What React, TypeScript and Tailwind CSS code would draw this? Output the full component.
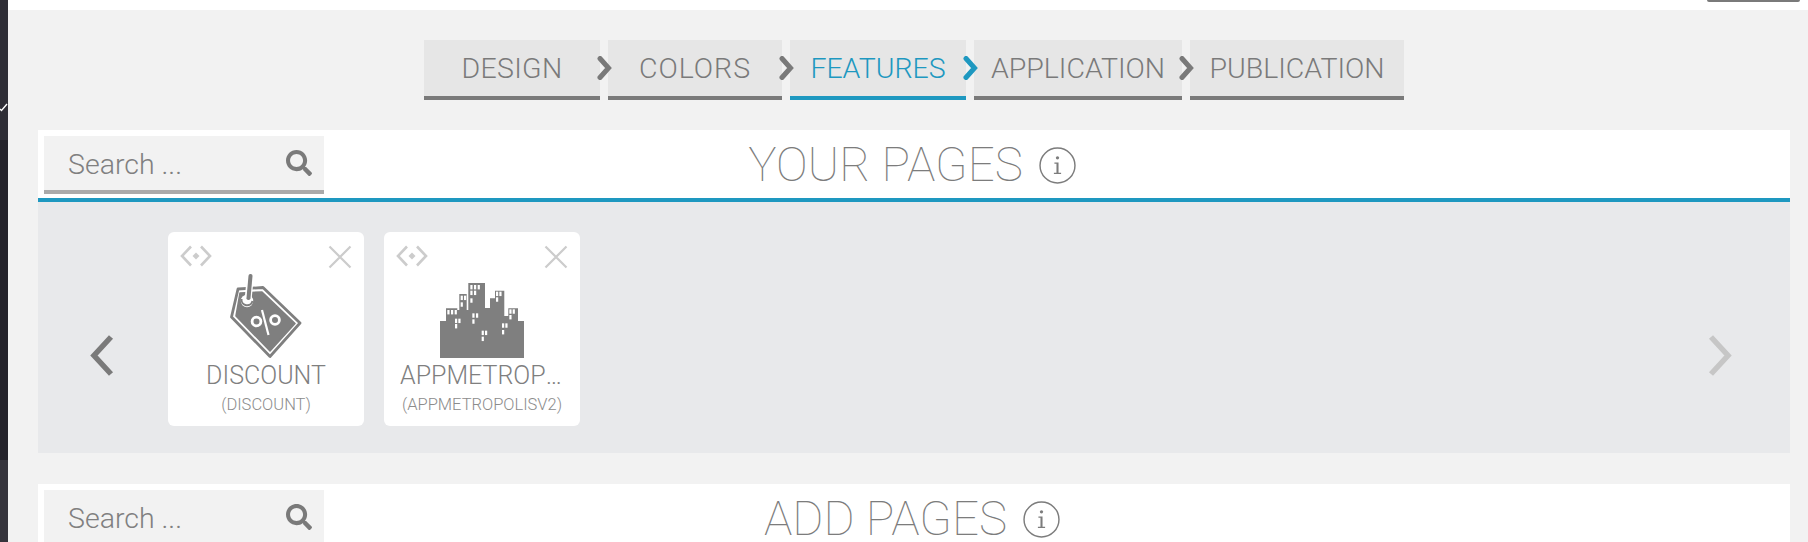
import React from "react";
import { FaSearch } from "react-icons/fa";

const steps = [
  { label: "DESIGN", width: "w-[176px]", tracking: "tracking-[0.3px]" },
  { label: "COLORS", width: "w-[174px]", tracking: "tracking-[1px]" },
  { label: "FEATURES", width: "w-[176px]", tracking: "", active: true },
  { label: "APPLICATION", width: "w-[208px]", tracking: "" },
  { label: "PUBLICATION", width: "w-[214px]", tracking: "", last: true },
];

const windows = [
  [301, 195], [312, 195], [323, 195], [301, 212], [312, 212], [301, 235],
  [272, 227], [282, 227], [272, 247],
  [232, 270], [243, 270], [254, 270],
  [378, 215], [388, 215], [378, 232],
  [418, 268], [428, 268], [418, 285],
  [255, 296], [265, 296], [255, 312],
  [307, 280], [318, 280], [307, 298],
  [335, 332], [345, 332], [335, 350],
  [396, 310], [406, 310], [396, 330],
];

const StepArrow = ({ className }: { className: string }) => (
  <svg viewBox="0 0 15 24" className={className} fill="none" stroke="currentColor" strokeWidth="5" strokeLinecap="round" strokeLinejoin="miter">
    <path d="M3 2.5 L11.5 12 L3 21.5" />
  </svg>
);

const InfoIcon = () => (
  <svg viewBox="0 0 36 36" className="w-[37px] h-[37px] shrink-0 text-[#7c7c7c]">
    <circle cx="18" cy="18" r="17" fill="none" stroke="currentColor" strokeWidth="1.4" />
    <circle cx="18" cy="10.5" r="1.6" fill="currentColor" />
    <path d="M15 15 H19 V25 H21.5 V26.2 H14.5 V25 H17 V16.2 H15 Z" fill="currentColor" />
  </svg>
);

const SearchBox = () => (
  <div className="w-[280px] h-[58px] bg-[#f2f2f2] border-b-4 border-[#aaaaaa] flex items-center justify-between pl-6 pr-3">
    <span className="text-[28.5px] font-light text-[#808080] pt-1">Search ...</span>
    <FaSearch className="text-[26px] text-[#7a7a7a]" />
  </div>
);

const SectionHeader = ({ title }: { title: string }) => (
  <div className="grid grid-cols-[1fr_auto_1fr] items-center pl-1.5 pr-2.5 pt-1.5 pb-1 bg-white">
    <SearchBox />
    <div className="flex items-center gap-4 text-[#7c7c7c]">
      <h2 className="text-[47.5px] leading-[54px] font-thin">{title}</h2>
      <InfoIcon />
    </div>
    <div />
  </div>
);

const MoveIcon = () => (
  <svg viewBox="0 0 32 22" className="w-8 h-[22px]" fill="none" stroke="#cccccc" strokeWidth="2.6">
    <path d="M11 1.5 L2 11 L11 20.5" />
    <path d="M21 1.5 L30 11 L21 20.5" />
    <path d="M16 7.5 L19.5 11 L16 14.5 L12.5 11 Z" fill="#cccccc" stroke="none" />
  </svg>
);

const CloseIcon = () => (
  <svg viewBox="0 0 24 24" className="w-6 h-6" fill="none" stroke="#cccccc" strokeWidth="2.2">
    <path d="M1.5 1.5 L22.5 22.5 M22.5 1.5 L1.5 22.5" />
  </svg>
);

const TagIcon = () => (
  <svg viewBox="0 0 72 84" className="w-[72px] h-[84px]">
    <path d="M8 15 L33 13.5 L70 49 L40 82.5 L1.5 43 Z" fill="none" stroke="#7f7f7f" strokeWidth="2.8" strokeLinejoin="round" />
    <path d="M10 19 L32 18 L65 49.5 L40 77 L6 42 Z" fill="#7f7f7f" stroke="#7f7f7f" strokeWidth="1.5" strokeLinejoin="round" />
    <circle cx="17" cy="27" r="6.2" fill="#ffffff" />
    <path d="M20.5 1.5 L18 26" stroke="#ffffff" strokeWidth="7" />
    <path d="M11.5 25 A5.6 5.6 0 0 0 22.5 27" fill="none" stroke="#7f7f7f" strokeWidth="2" />
    <path d="M20.5 2 L18.5 24" stroke="#7f7f7f" strokeWidth="4" strokeLinecap="round" />
    <circle cx="26.5" cy="47.5" r="4.4" fill="none" stroke="#ffffff" strokeWidth="2.8" />
    <circle cx="45" cy="46" r="4.4" fill="none" stroke="#ffffff" strokeWidth="2.8" />
    <path d="M32 36 L38.5 61" stroke="#ffffff" strokeWidth="2.2" />
  </svg>
);

const CityIcon = () => (
  <svg viewBox="0 0 84 75" className="w-[84px] h-[75px]">
    <path
      d="M0 75 H84 V38 H78 V25.3 H68.3 V33 H64.3 V7.7 H55 V15.3 H50 V25 H45 V0 H28.3 V27 H26.7 V11 H19.3 V27 H17.3 V25.3 H6 V38 H0 Z"
      fill="#7f7f7f"
    />
    {windows.map(([x, y]) => (
      <rect key={`${x}-${y}`} x={x / 3 - 70} y={y / 3 - 63} width="2.2" height="4.4" fill="#ffffff" />
    ))}
  </svg>
);

const PageCard = ({ name, id, icon }: { name: string; id: string; icon: React.ReactNode }) => (
  <div className="w-[196px] h-[194px] bg-white rounded-md shrink-0 px-3 pt-[13px] flex flex-col">
    <div className="flex items-start justify-between h-[22px]">
      <MoveIcon />
      <CloseIcon />
    </div>
    <div className="h-[91px] flex items-end justify-center">{icon}</div>
    <div className="mt-1 px-1 text-center text-[25px] leading-7 font-light text-[#7f7f7f] truncate">{name}</div>
    <div className="mt-[5px] text-center text-[16.5px] leading-5 font-light text-[#8c8c8c] whitespace-nowrap">{id}</div>
  </div>
);

export default function App() {
  return (
    <div className="h-[542px] w-[1808px] overflow-hidden flex bg-[#f2f2f2] font-['Roboto',sans-serif]">
      {/* dark app sidebar peeking in from the left */}
      <div className="w-2 shrink-0 flex flex-col bg-[#2f2e36]">
        <div className="h-[140px] bg-[#2f2e36] flex items-end pb-7">
          <svg viewBox="0 0 8 10" className="w-2 h-2.5" fill="none" stroke="#ffffff" strokeWidth="1.4">
            <path d="M0 7 L1.5 8.5 L7 2" />
          </svg>
        </div>
        <div className="h-[320px] bg-[#24232b]" />
        <div className="flex-1 bg-[#35343c]" />
      </div>

      <div className="flex-1 min-w-0">
        <div className="h-2.5 bg-white flex justify-end pr-2">
          <div className="w-[93px] h-0.5 bg-[#7a7a7a] rounded-b-sm" />
        </div>

        <div className="pl-[30px] pr-[18px]">
          <nav className="flex justify-center gap-2 pt-[30px] pb-[30px]">
            {steps.map((step) => (
              <div
                key={step.label}
                className={`relative h-[60px] bg-[#e6e6e6] border-b-4 flex items-center justify-center pt-0.5 text-[28.5px] font-light ${step.width} ${step.tracking} ${
                  step.active ? "border-[#1e98c0] text-[#1e98c0]" : "border-[#7a7a7a] text-[#7a7a7a]"
                }`}
              >
                {step.label}
                {!step.last && (
                  <StepArrow
                    className={`absolute z-10 -right-3 top-4 w-[15px] h-6 ${step.active ? "text-[#1e98c0]" : "text-[#7a7a7a]"}`}
                  />
                )}
              </div>
            ))}
          </nav>

          <section className="border-b-4 border-[#1e98c0]">
            <SectionHeader title="YOUR PAGES" />
          </section>

          <section className="h-[251px] bg-[#e8e9eb] flex items-start">
            <div className="w-[130px] shrink-0 pl-[52px] pt-[133px]">
              <svg viewBox="0 0 24 41" className="w-6 h-[41px]" fill="none" stroke="#7a7a7a" strokeWidth="5.5">
                <path d="M21 2 L4 20.5 L21 39" />
              </svg>
            </div>
            <div className="flex-1 flex gap-5 pt-[30px]">
              <PageCard name="DISCOUNT" id="(DISCOUNT)" icon={<TagIcon />} />
              <PageCard name="APPMETROPOLISV2" id="(APPMETROPOLISV2)" icon={<CityIcon />} />
            </div>
            <div className="w-[82px] shrink-0 pt-[133px]">
              <svg viewBox="0 0 24 41" className="w-6 h-[41px]" fill="none" stroke="#c6c6c6" strokeWidth="5.5">
                <path d="M3 2 L20 20.5 L3 39" />
              </svg>
            </div>
          </section>

          <section className="mt-[31px]">
            <SectionHeader title="ADD PAGES" />
          </section>
        </div>
      </div>
    </div>
  );
}
